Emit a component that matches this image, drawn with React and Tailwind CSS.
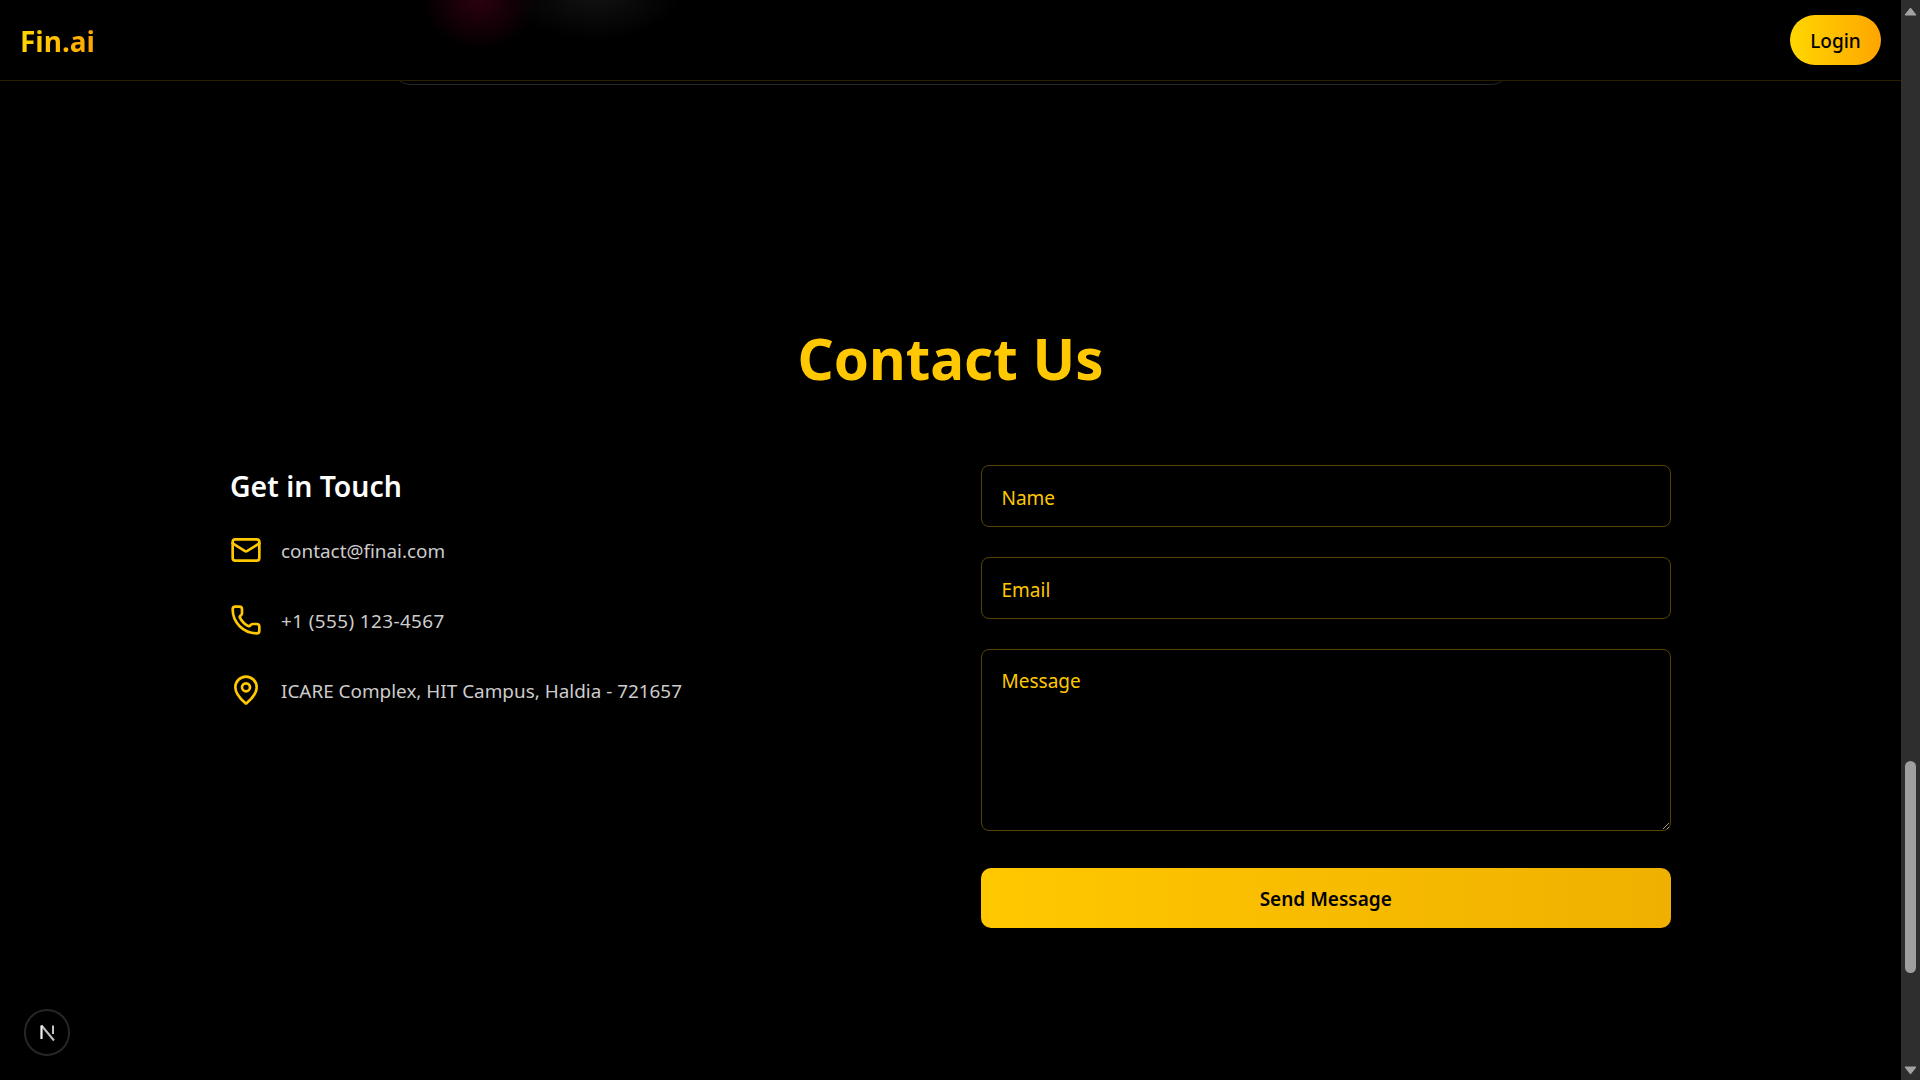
import React from "react"
import { Mail, Phone, MapPin } from "lucide-react"

const contactItems = [
  { Icon: Mail, text: "contact@finai.com", spacing: "" },
  { Icon: Phone, text: "+1 (555) 123-4567", spacing: "tracking-[0.4px]" },
  { Icon: MapPin, text: "ICARE Complex, HIT Campus, Haldia - 721657", spacing: "" },
]

const fieldClass = "rounded-lg border border-[#554300] bg-black px-5 text-[19px] text-[#FFC800] outline-none placeholder:text-[#FFC800]"

const Header = () => (
  <header className="relative z-10 flex h-[81px] shrink-0 items-center justify-between border-b border-[#2a2000] bg-black pl-5 pr-5">
    <div className="bg-gradient-to-r from-[#FFD700] to-[#FFA500] bg-clip-text pt-[2px] text-[28px] font-bold text-transparent">Fin.ai</div>
    <button className="h-[50px] w-[91px] rounded-full bg-gradient-to-r from-[#FFD700] to-[#FFA500] pt-[2px] text-[19px] font-medium text-black">Login</button>
  </header>
)

const Scrollbar = () => (
  <div className="flex h-full w-[19px] shrink-0 flex-col items-center bg-[#2e2e2e]">
    <svg width="13" height="9" viewBox="0 0 13 9" className="mt-[7px] shrink-0"><path d="M6.5 1 L12 8 L1 8 Z" fill="#a3a3a3" stroke="#a3a3a3" strokeLinejoin="round" /></svg>
    <div className="mt-[745px] h-[212px] w-[11px] shrink-0 rounded-full bg-[#9f9f9f]" />
    <svg width="13" height="9" viewBox="0 0 13 9" className="mt-[93px] shrink-0"><path d="M1 1 L12 1 L6.5 8 Z" fill="#a3a3a3" stroke="#a3a3a3" strokeLinejoin="round" /></svg>
  </div>
)

const DevBadge = () => (
  <div className="absolute bottom-[24px] left-[24px] flex h-[47px] w-[46px] items-center justify-center rounded-full border-2 border-[#262626] bg-black">
    <svg width="18" height="18" viewBox="0 0 18 18" className="ml-[1px]">
      <path d="M2.5 1.5 V15" stroke="#f2f2f2" strokeWidth="2.2" />
      <path d="M2.5 1.5 L15 16.5" stroke="#ffffff" strokeWidth="2" opacity="0.75" />
      <path d="M14 1.5 V10" stroke="#f2f2f2" strokeWidth="1.8" opacity="0.9" />
    </svg>
  </div>
)

export default function App() {
  return (
    <div className="flex h-[1080px] w-full overflow-hidden bg-black font-['Noto_Sans',sans-serif]">
      <div className="relative flex min-w-0 flex-1 flex-col">
        <Header />

        {/* what's left of the section scrolled under the nav */}
        <div className="pointer-events-none absolute left-[422px] top-[-50px] z-20 h-[100px] w-[115px] bg-[radial-gradient(closest-side,#2c0010,transparent)]" />
        <div className="pointer-events-none absolute left-[510px] top-[-50px] z-20 h-[90px] w-[170px] bg-[radial-gradient(closest-side,#121212,transparent)]" />
        <div className="mx-auto -mt-[30px] h-[34px] w-[1120px] shrink-0 rounded-b-[20px] border border-[#262626]" />

        <main className="flex flex-col items-center pt-[236px]">
          <h2 className="text-[56.5px] leading-[76px] font-bold text-[#FFC800]">Contact Us</h2>

          <div className="mt-[68px] grid w-[1441px] grid-cols-2 gap-[60px]">
            <div>
              <h3 className="text-[28.4px] leading-[42px] font-semibold text-white">Get in Touch</h3>
              <div className="mt-[23px] flex flex-col gap-[30px]">
                {contactItems.map(({ Icon, text, spacing }) => (
                  <div key={text} className="flex h-[40px] items-center gap-[19px]">
                    <Icon size={32} className="shrink-0 text-[#FFC800]" />
                    <span className={`pt-[2px] text-[18.9px] text-[#cccccc] ${spacing}`}>{text}</span>
                  </div>
                ))}
              </div>
            </div>

            <form className="flex flex-col">
              <input placeholder="Name" className={`h-[62px] pt-[3px] ${fieldClass}`} />
              <input placeholder="Email" className={`mt-[30px] h-[62px] pt-[3px] ${fieldClass}`} />
              <textarea placeholder="Message" className={`mt-[30px] h-[182px] py-[17px] ${fieldClass}`} />
              <button type="button" className="mt-[37px] h-[60px] rounded-[10px] bg-gradient-to-r from-[#FFC800] to-[#F0B000] pt-[2px] text-[19px] font-semibold text-black">Send Message</button>
            </form>
          </div>
        </main>

        <DevBadge />
      </div>
      <Scrollbar />
    </div>
  )
}
